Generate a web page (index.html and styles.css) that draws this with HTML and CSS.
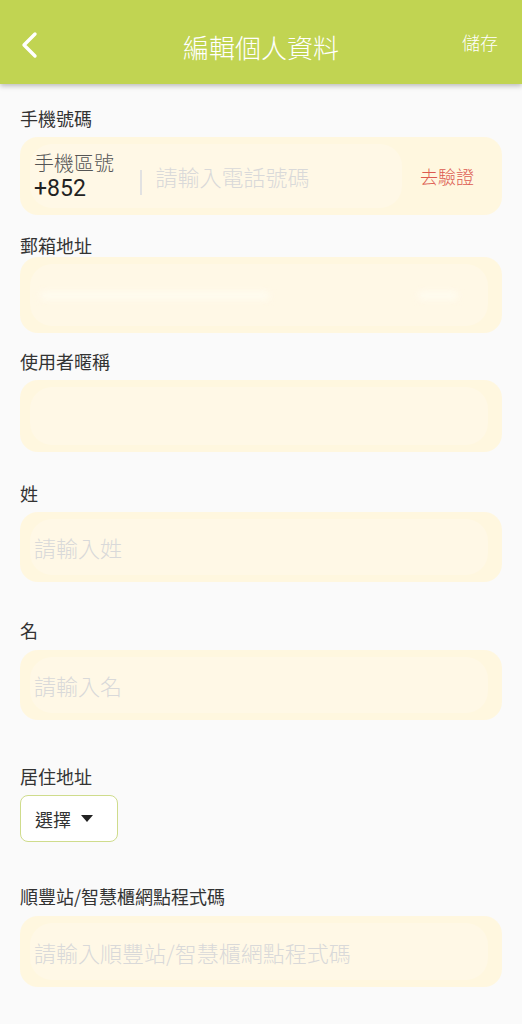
FILE: index.html
```html
<!DOCTYPE html>
<html lang="zh-Hant">
<head>
  <meta charset="UTF-8">
  <title>編輯個人資料</title>
  <link rel="stylesheet" href="styles.css">
</head>
<body>

  <!-- 頂部標題列 -->
  <div class="topbar">
    <button type="button" class="back-btn">
      <svg width="18" height="28" viewBox="0 0 18 28"><path d="M15 3 L4 14 L15 25" fill="none" stroke="#fff" stroke-width="3.4" stroke-linecap="round" stroke-linejoin="round"/></svg>
    </button>
    <div class="topbar-title">編輯個人資料</div>
    <button type="button" class="save-btn">儲存</button>
  </div>

  <div class="form">

    <!-- 手機號碼 -->
    <div class="field field-phone">
      <label>手機號碼</label>
      <div class="box box-phone">
        <div class="box-inner inner-phone"></div>
        <div class="area-code">
          <span class="area-label">手機區號</span>
          <span class="area-value">+852</span>
        </div>
        <span class="divider"></span>
        <span class="placeholder">請輸入電話號碼</span>
        <span class="verify">去驗證</span>
      </div>
    </div>

    <!-- 郵箱地址 -->
    <div class="field field-email">
      <label>郵箱地址</label>
      <div class="box box-email">
        <div class="box-inner"></div>
        <span class="blur-text blur-a"></span>
        <span class="blur-text blur-b"></span>
      </div>
    </div>

    <!-- 使用者暱稱 -->
    <div class="field field-nick">
      <label>使用者暱稱</label>
      <div class="box box-nick">
        <div class="box-inner"></div>
      </div>
    </div>

    <!-- 姓 -->
    <div class="field field-last">
      <label>姓</label>
      <div class="box">
        <div class="box-inner"></div>
        <span class="placeholder">請輸入姓</span>
      </div>
    </div>

    <!-- 名 -->
    <div class="field field-first">
      <label>名</label>
      <div class="box">
        <div class="box-inner"></div>
        <span class="placeholder">請輸入名</span>
      </div>
    </div>

    <!-- 居住地址 -->
    <div class="field field-region">
      <label>居住地址</label>
      <button type="button" class="select-btn">選擇 <span class="caret"></span></button>
    </div>

    <!-- 順豐站 -->
    <div class="field field-sf">
      <label>順豐站/智慧櫃網點程式碼</label>
      <div class="box box-sf">
        <div class="box-inner"></div>
        <span class="placeholder">請輸入順豐站/智慧櫃網點程式碼</span>
      </div>
    </div>

  </div>

</body>
</html>
```

FILE: styles.css
```css
body {
  margin: 0;
  background-color: #fafafa;
  font-family: "Noto Sans CJK TC", "Noto Sans", sans-serif;
  font-weight: 300;
  color: #333;
}
/* 頂部標題列 */
.topbar {
  position: relative;
  height: 84px;
  background-color: #c1d452;
  box-shadow: 0 2px 5px rgba(0, 0, 0, 0.25);
  display: flex;
  align-items: center;
  justify-content: space-between;
  padding: 6px 24px 0 20px;
  box-sizing: border-box;
}
.back-btn, .save-btn {
  background: none;
  border: none;
  padding: 0;
  color: #fff;
  font-family: inherit;
  font-weight: 300;
}
.back-btn {
  width: 22px;
  height: 28px;
  display: flex;
  align-items: center;
}
.save-btn {
  font-size: 18px;
  line-height: 24px;
  margin-top: -6px;
}
.topbar-title {
  position: absolute;
  left: 0;
  right: 0;
  top: 30px;
  text-align: center;
  color: #fff;
  font-size: 26px;
  line-height: 34px;
  pointer-events: none;
}
.form {
  padding: 0 20px;
}
.field label {
  display: block;
  font-size: 18px;
  font-weight: 400;
  line-height: 24px;
  color: #333;
  margin-bottom: 7px;
}
.field-phone { margin-top: 22px; }
.field-email { margin-top: 18px; }
.field-email label { margin-bottom: 0; }
.field-nick { margin-top: 16px; }
.field-last { margin-top: 29px; }
.field-first { margin-top: 36px; }
.field-first label { margin-bottom: 8px; }
.field-region { margin-top: 44px; }
.field-sf { margin-top: 42px; }
.field-sf label { margin-bottom: 8px; }

/* 輸入框 */
.box {
  position: relative;
  height: 70px;
  background-color: #fff7df;
  border-radius: 18px;
  display: flex;
  align-items: center;
  padding: 0 14px;
  box-sizing: border-box;
}
.box-phone { height: 78px; }
.box-email { height: 76px; }
.box-nick { height: 72px; }
.box-sf { height: 71px; }
.box-inner {
  position: absolute;
  top: 7px;
  bottom: 7px;
  left: 10px;
  right: 14px;
  border-radius: 22px;
  background-color: #fff8e6;
}
.inner-phone {
  right: 100px;
}
.placeholder {
  position: relative;
  font-size: 22px;
  color: #d9d9d9;
  white-space: nowrap;
}
.area-code {
  position: relative;
  display: flex;
  flex-direction: column;
  width: 106px;
}
.area-label {
  font-size: 20px;
  line-height: 25px;
  color: #555;
}
.area-value {
  font-family: Roboto, "Noto Sans", sans-serif;
  font-weight: 400;
  font-size: 23px;
  line-height: 27px;
  color: #222;
}
.divider {
  position: relative;
  width: 1.5px;
  height: 25px;
  background-color: #e2e2e2;
  margin: 12px 14px 0 0;
}
.verify {
  position: relative;
  margin-left: auto;
  margin-right: 14px;
  font-size: 18px;
  color: #dc5a4f;
}
.blur-text {
  position: relative;
  height: 9px;
  border-radius: 5px;
  background-color: #fffbef;
  filter: blur(3px);
}
.blur-a {
  width: 230px;
  margin-left: 6px;
}
.blur-b {
  width: 40px;
  margin-left: auto;
  margin-right: 30px;
}

/* 選擇按鈕 */
.select-btn {
  display: flex;
  align-items: center;
  gap: 10px;
  width: 98px;
  height: 47px;
  padding: 0 14px;
  background-color: #fff;
  border: 1.5px solid #cfdc8c;
  border-radius: 8px;
  font-family: inherit;
  font-weight: 400;
  font-size: 18px;
  color: #333;
  box-sizing: border-box;
}
.caret {
  width: 0;
  height: 0;
  border-left: 6px solid transparent;
  border-right: 6px solid transparent;
  border-top: 7px solid #222;
}
```
